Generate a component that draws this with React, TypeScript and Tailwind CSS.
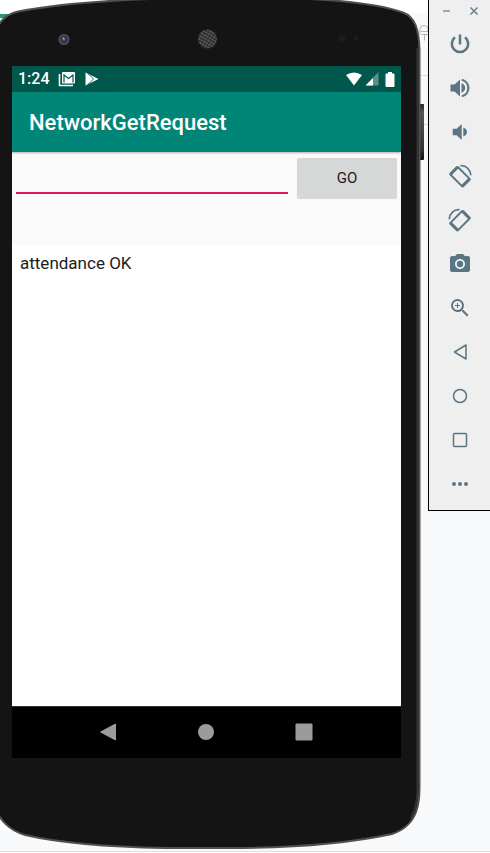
import type { ReactNode } from "react";
import { MdPhotoCamera, MdZoomIn } from "react-icons/md";

function RotateIcon({ flipped = false }: { flipped?: boolean }) {
  return (
    <svg viewBox="0 0 24 24" className={flipped ? "size-6 -scale-x-100" : "size-6"} fill="none" stroke="currentColor" aria-hidden="true">
      <g transform="rotate(-45 12 12.700)">
        <rect x="6.700" y="3.700" width="10.600" height="18" rx="1" strokeWidth="1.900" />
        <path d="M6.700 4.500h10.600M6.700 20.900h10.600" strokeWidth="2.600" />
      </g>
      <path d="M12.500 1.700C18 1.200 22.400 5.500 22.800 11.300" strokeWidth="1.700" />
    </svg>
  );
}

const tools: { label: string; icon: ReactNode }[] = [
  {
    label: "Power",
    icon: (
      <svg viewBox="0 0 24 24" className="size-6" fill="none" stroke="currentColor" strokeWidth="2.500" aria-hidden="true">
        <path d="M12 2.500v10M7 5.300a8.200 8.200 0 1 0 10 0" />
      </svg>
    ),
  },
  {
    label: "Volume up",
    icon: (
      <svg viewBox="0 0 24 24" className="size-6" fill="currentColor" aria-hidden="true">
        <path d="M2.500 8.500h4l5.500-5v17l-5.500-5h-4zM13.500 7.300c2.300.8 3.700 2.500 3.700 4.700s-1.400 3.900-3.700 4.700z" />
        <path d="M13.800 3.800a8.400 8.400 0 0 1 0 16.400" fill="none" stroke="currentColor" strokeWidth="2.200" />
      </svg>
    ),
  },
  {
    label: "Volume down",
    icon: (
      <svg viewBox="0 0 24 24" className="size-6" fill="currentColor" aria-hidden="true">
        <path d="M4.700 8.700h4l5-4.700v16l-5-4.700h-4zM15.300 7.500c2.300.8 3.700 2.400 3.700 4.500s-1.400 3.700-3.700 4.500z" />
      </svg>
    ),
  },
  { label: "Rotate left", icon: <RotateIcon /> },
  { label: "Rotate right", icon: <RotateIcon flipped /> },
  { label: "Take screenshot", icon: <MdPhotoCamera className="size-6" /> },
  { label: "Zoom", icon: <MdZoomIn className="size-6" /> },
  {
    label: "Back",
    icon: (
      <svg viewBox="0 0 24 24" className="size-6" fill="none" stroke="currentColor" strokeWidth="1.5" strokeLinejoin="round" aria-hidden="true">
        <path d="M18 5v14L6.500 12z" />
      </svg>
    ),
  },
  {
    label: "Home",
    icon: (
      <svg viewBox="0 0 24 24" className="size-6" fill="none" stroke="currentColor" strokeWidth="1.5" aria-hidden="true">
        <circle cx="12" cy="12" r="6.500" />
      </svg>
    ),
  },
  {
    label: "Overview",
    icon: (
      <svg viewBox="0 0 24 24" className="size-6" fill="none" stroke="currentColor" strokeWidth="1.5" aria-hidden="true">
        <rect x="5.500" y="5.500" width="13" height="13" rx="1" />
      </svg>
    ),
  },
  {
    label: "More",
    icon: (
      <svg viewBox="0 0 24 24" className="size-6" fill="currentColor" aria-hidden="true">
        <circle cx="6" cy="12" r="2" />
        <circle cx="12" cy="12" r="2" />
        <circle cx="18" cy="12" r="2" />
      </svg>
    ),
  },
];

function DeviceShell() {
  return (
    <svg viewBox="0 0 428 851" preserveAspectRatio="none" className="absolute inset-0 -z-10 size-full" aria-hidden="true">
      <defs>
        <linearGradient id="key" x1="0" x2="0" y1="0" y2="1">
          <stop offset="0" stopColor="#222" />
          <stop offset="0.15" stopColor="#555" />
          <stop offset="0.8" stopColor="#333" />
          <stop offset="1" stopColor="#111" />
        </linearGradient>
        <pattern id="mesh" width="3" height="3" patternUnits="userSpaceOnUse" patternTransform="rotate(30)">
          <rect width="3" height="3" fill="#5c5c5c" />
          <circle cx="1.5" cy="1.5" r="1.100" fill="#111" />
        </pattern>
        <radialGradient id="lens">
          <stop offset="0" stopColor="#70708c" />
          <stop offset="0.4" stopColor="#2c2c40" />
          <stop offset="1" stopColor="#555564" />
        </radialGradient>
      </defs>
      <rect x="0" y="0" width="428" height="13" fill="#fff" />
      <rect x="0" y="14" width="8" height="14" fill="#2b9384" />
      <rect x="0" y="18" width="3" height="4" fill="#dff3f0" />
      <rect x="0" y="800" width="30" height="30" fill="#fff" />
      <g fill="none" stroke="#b4b4b8">
        <path d="M420 75.500h8M420 124.500h8" stroke="#dcdde2" />
        <path d="M420 34v-5q0-3.500 4-3.500t4 3.500v2.500h-7M421 34.500h7M424.500 34.500v6" />
      </g>
      <rect x="419" y="104" width="5" height="56" rx="1" fill="url(#key)" />
      <path
        d="M-6 36C-2 24 3 15 18 11.500C55 4.500 95 1 150-1H310C350 1 385 6 403 12.500C415 17 419 29 419.500 50V787Q419.500 803 416 812C412 823 404 830 392 834C350 843 290 848 230 848H165C110 847 60 843 25 835C8 830 1 820-6 808Z"
        fill="#141414"
        stroke="#505050"
        strokeWidth="2"
      />
      <path d="M417.500 48V790Q417 808 411 818" fill="none" stroke="#343434" strokeWidth="2" />
      <circle cx="64" cy="39.500" r="5.500" fill="url(#lens)" />
      <circle cx="63.500" cy="38.500" r="1.100" fill="#a0a0b8" />
      <circle cx="207.500" cy="39" r="9.500" fill="url(#mesh)" />
      <circle cx="342" cy="38" r="3.500" fill="#1c1c1c" />
      <circle cx="356" cy="38" r="2.500" fill="#1c1c1c" />
    </svg>
  );
}

function StatusBar() {
  return (
    <div className="flex h-[26px] items-center bg-[#00574b] px-1.5 text-white">
      <span className="text-base font-medium">1:24</span>
      <svg viewBox="0 0 18 16" className="ml-2 h-4 w-[18px]" aria-hidden="true">
        <path d="M1.500 3v11.500H15" fill="none" stroke="currentColor" strokeWidth="1.600" />
        <rect x="4" y="1" width="13" height="11.500" rx="1" fill="currentColor" />
        <path d="M6 11.500V4L10.500 7.500 15 4v7.500" fill="none" stroke="#00574b" strokeWidth="1.200" />
      </svg>
      <svg viewBox="0 0 16 16" className="ml-2 size-4" aria-hidden="true">
        <path d="M1.500 1.500L14.500 8 1.500 14.500z" fill="currentColor" />
        <path d="M3 1.500l6.500 6.500L3 14.500" fill="none" stroke="#00574b" strokeWidth="0.900" />
      </svg>
      <svg viewBox="0 0 18 14" className="ml-auto h-3.5 w-[18px]" fill="currentColor" aria-hidden="true">
        <path d="M1 3Q9-2 17 3L9 13.500z" />
      </svg>
      <svg viewBox="0 0 14 14" className="ml-0.5 size-3.5" fill="currentColor" aria-hidden="true">
        <path d="M13.500 0v13.500H.5z" opacity="0.350" />
        <path d="M8 6v7.500H.5z" />
      </svg>
      <svg viewBox="0 0 10 15" className="ml-1.5 h-[15px] w-2.5" fill="currentColor" aria-hidden="true">
        <path d="M3 0h4v1.500h1.500q1 0 1 1V14q0 1-1 1h-7q-1 0-1-1V2.500q0-1 1-1H3z" />
      </svg>
    </div>
  );
}

function Phone() {
  return (
    <main className="relative isolate min-w-0 flex-1 pt-[66px] pr-[27px] pb-[93px] pl-3">
      <DeviceShell />
      <div className="flex flex-col bg-white">
        <StatusBar />
        <header className="z-10 flex h-[60px] items-center bg-[#008577] px-[17px] shadow-[0_1px_2px_rgba(0,0,0,0.3)]">
          <h1 className="text-[22px] font-medium text-white">NetworkGetRequest</h1>
        </header>
        <form className="flex h-[93px] items-start gap-[9px] bg-[#fafafa] px-1 pt-1.5" onSubmit={(e) => e.preventDefault()}>
          <input
            type="text"
            aria-label="Request address"
            className="mt-1 h-8 min-w-0 flex-1 border-b-2 border-[#d81b60] bg-transparent px-1 text-[17px] outline-none"
          />
          <button type="submit" className="h-10 w-[100px] rounded-xs bg-[#d6d7d7] text-[15px] text-[#1c1c1c] shadow-[0_1px_1px_rgba(0,0,0,0.15)]">
            GO
          </button>
        </form>
        <p className="h-[461px] px-2 pt-1.5 text-[17px] text-[#1c1c1c]">attendance OK</p>
        <nav className="flex h-[52px] items-center justify-center gap-[74px] border-t border-[#333] bg-black pr-0.5 pb-0.5 text-[#9b9b9b]">
          <button type="button" aria-label="Back">
            <svg viewBox="0 0 24 24" className="size-6" fill="currentColor" stroke="currentColor" strokeLinejoin="round" aria-hidden="true">
              <path d="M19.500 4v16L4.500 12z" />
            </svg>
          </button>
          <button type="button" aria-label="Home">
            <svg viewBox="0 0 24 24" className="size-6" fill="currentColor" aria-hidden="true">
              <circle cx="12" cy="12" r="8" />
            </svg>
          </button>
          <button type="button" aria-label="Overview">
            <svg viewBox="0 0 24 24" className="size-6" fill="currentColor" aria-hidden="true">
              <rect x="3.500" y="3.500" width="17" height="17" rx="1" />
            </svg>
          </button>
        </nav>
      </div>
    </main>
  );
}

function Toolbar() {
  return (
    <aside className="flex w-[62px] shrink-0 flex-col border-b border-l border-black bg-[#efefef] pb-1 text-[#5a7685]">
      <div className="flex h-[22px] items-center justify-center gap-3">
        <button type="button" aria-label="Minimize">
          <svg viewBox="0 0 16 16" className="size-4" fill="none" stroke="#7f8f98" strokeWidth="1.500" aria-hidden="true">
            <path d="M5 8h7" />
          </svg>
        </button>
        <button type="button" aria-label="Close">
          <svg viewBox="0 0 16 16" className="size-4" fill="none" stroke="#6a808c" strokeWidth="1.500" aria-hidden="true">
            <path d="M4.500 4.500l7 7M11.500 4.500l-7 7" />
          </svg>
        </button>
      </div>
      {tools.map((tool) => (
        <button key={tool.label} type="button" aria-label={tool.label} className="flex h-11 items-center justify-center">
          {tool.icon}
        </button>
      ))}
    </aside>
  );
}

export default function App() {
  return (
    <div className="bg-[#f8f9fb] font-[Roboto,sans-serif]">
      <div className="flex items-start border-b border-[#e0e0e0]">
        <Phone />
        <Toolbar />
      </div>
    </div>
  );
}
